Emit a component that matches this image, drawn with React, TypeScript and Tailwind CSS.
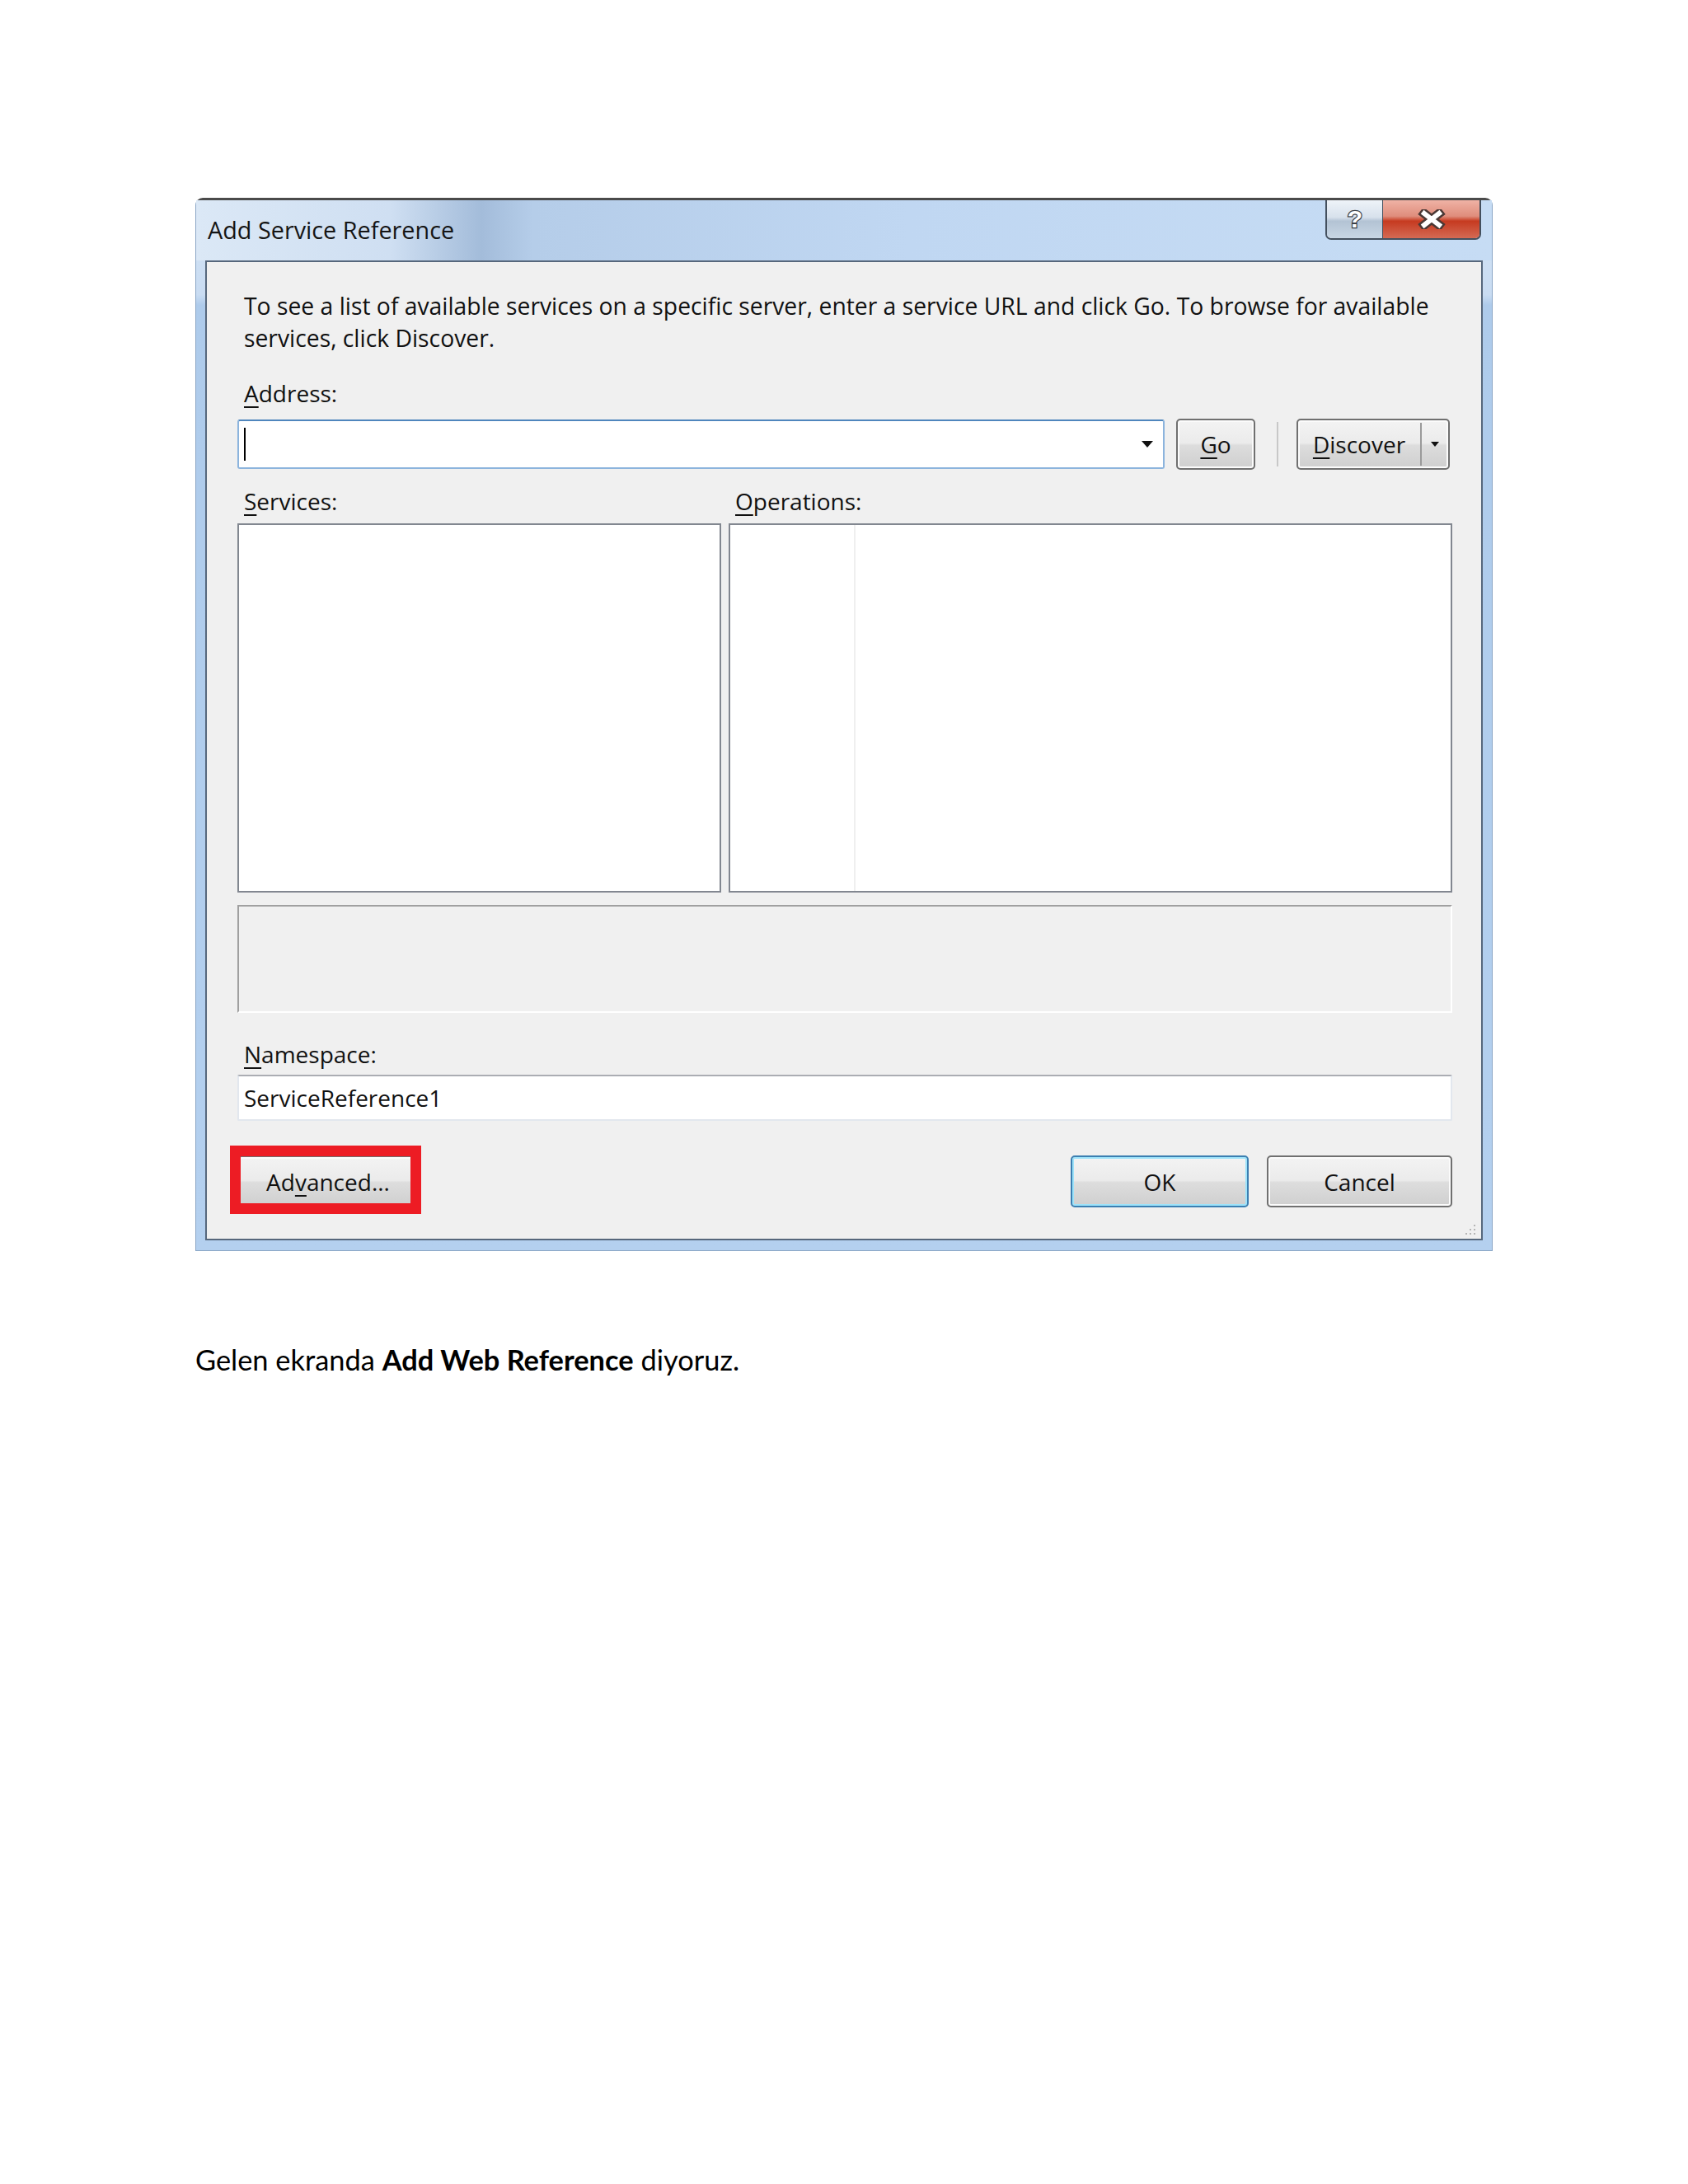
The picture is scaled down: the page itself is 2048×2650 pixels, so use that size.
import React from "react";

const ui = "font-['Open_Sans','Noto_Sans',sans-serif]";

const U = ({ children }: { children: React.ReactNode }) => (
  <span className="underline decoration-[2px] underline-offset-[5px]">{children}</span>
);

type BtnProps = {
  children: React.ReactNode;
  className?: string;
  primary?: boolean;
};

const Btn: React.FC<BtnProps> = ({ children, className = "", primary = false }) => (
  <div
    className={`flex items-center justify-center rounded-[5px] border-2 bg-[linear-gradient(to_bottom,#f3f3f3_0%,#ebebeb_48%,#dddddd_52%,#cfcfcf_100%)] text-[28px] text-[#111] ${
      primary
        ? "border-[#3c7fb1] shadow-[inset_0_0_0_2px_#9ee3fa]"
        : "border-[#707070] shadow-[inset_0_0_0_2px_#fbfbfb]"
    } ${className}`}
  >
    {children}
  </div>
);

const Arrow = ({ w = 14, h = 8 }: { w?: number; h?: number }) => (
  <svg width={w} height={h} viewBox={`0 0 ${w} ${h}`}>
    <path d={`M0 0H${w}L${w / 2} ${h}Z`} fill="#111" />
  </svg>
);

export default function App() {
  return (
    <div className="min-h-[2650px] w-[2048px] bg-white pl-[237px] pt-[240px]">
      {/* dialog */}
      <div
        className={`${ui} flex h-[1278px] w-[1574px] flex-col rounded-t-[9px] border-x border-b border-t-[3px] border-x-[#8aa6c6] border-b-[#8aa6c6] border-t-[#4a4a4a] bg-[linear-gradient(to_bottom,#d4e4f5_0%,#c9dcf2_9%,#aecbeb_10%,#b4d0ef_100%)]`}
      >
        {/* title bar */}
        <div className="flex h-[73px] items-start bg-[linear-gradient(to_right,#dbe8f6_0%,#cfdff2_15%,#a3bcda_22%,#b5cde9_26%,#c0d7f2_55%,#c6dcf4_100%)] pl-[14px] pr-[13px]">
          <div className="mt-[16px] text-[28.8px] leading-[40px] text-[#151515]">Add Service Reference</div>
          <div className="flex-1" />
          <div className="flex h-[48px] overflow-hidden rounded-b-[7px] border-2 border-t-0 border-[#44505e]">
            <div className="flex w-[68px] items-center justify-center border-r border-[#44505e] bg-[linear-gradient(to_bottom,#eef3f8_0%,#d7e1ec_45%,#b3c3d4_55%,#c8d6e4_100%)]">
              <svg width="24" height="32" viewBox="0 0 24 32">
                <text
                  x="12"
                  y="26"
                  textAnchor="middle"
                  fontSize="30"
                  fontWeight="bold"
                  fontFamily="Liberation Sans, sans-serif"
                  fill="#fff"
                  stroke="#3a3f46"
                  strokeWidth="2.5"
                  paintOrder="stroke"
                >
                  ?
                </text>
              </svg>
            </div>
            <div className="flex w-[117px] items-center justify-center bg-[linear-gradient(to_bottom,#efb2a5_0%,#df8d7c_42%,#c63a20_55%,#d46a54_100%)]">
              <svg width="34" height="24" viewBox="0 0 34 24">
                <path d="M8 5L26 19M26 5L8 19" stroke="#4a3835" strokeWidth="11" strokeLinecap="square" />
                <path d="M8 5L26 19M26 5L8 19" stroke="#fff" strokeWidth="6" strokeLinecap="square" />
              </svg>
            </div>
          </div>
        </div>

        {/* client area */}
        <div className="mx-[11px] mb-[12px] flex flex-1 flex-col border-2 border-[#56677c] bg-[#f0f0f0] pl-[37px] pr-[35px]">
          <div className="relative flex flex-1 flex-col">
            <div className="mt-[34px] whitespace-nowrap pl-[8px] text-[28.3px] leading-[39px] text-[#111]">
              To see a list of available services on a specific server, enter a service URL and click Go. To browse for available
              <br />
              services, click Discover.
            </div>

            <div className="mt-[28px] pl-[8px] text-[28px] leading-[38px] text-[#111]">
              <U>A</U>ddress:
            </div>
            <div className="mt-[12px] flex h-[62px] items-center">
              <div className="flex h-[60px] w-[1125px] items-center rounded-[3px] border-2 border-[#8cb4dd] border-t-[#4f86bd] bg-white pl-[6px] pr-[12px]">
                <div className="h-[40px] w-[2px] bg-black" />
                <div className="flex-1" />
                <Arrow />
              </div>
              <Btn className="ml-[14px] h-[62px] w-[96px]">
                <U>G</U>o
              </Btn>
              <div className="ml-[26px] h-[54px] w-[2px] bg-[#c8c8c8]" />
              <Btn className="ml-[22px] h-[62px] w-[186px] !justify-start">
                <div className="flex flex-1 justify-center">
                  <span>
                    <U>D</U>iscover
                  </span>
                </div>
                <div className="h-[52px] w-[2px] bg-[#9a9a9a]" />
                <div className="flex w-[32px] justify-center">
                  <Arrow w={10} h={6} />
                </div>
              </Btn>
            </div>

            <div className="mt-[19px] flex text-[28px] leading-[38px] text-[#111]">
              <div className="w-[596px] pl-[8px]">
                <U>S</U>ervices:
              </div>
              <div className="pl-[8px]">
                <U>O</U>perations:
              </div>
            </div>
            <div className="mt-[8px] flex h-[448px] gap-[9px]">
              <div className="w-[587px] border-2 border-[#828790] bg-white" />
              <div className="flex flex-1 border-2 border-[#828790] bg-white">
                <div className="w-[152px] border-r-2 border-[#efefef]" />
              </div>
            </div>

            <div className="mt-[15px] h-[131px] border-2 border-[#a0a0a0] border-b-white border-r-white bg-[#f0f0f0]" />

            <div className="mt-[31px] pl-[8px] text-[28px] leading-[38px] text-[#111]">
              <U>N</U>amespace:
            </div>
            <div className="mt-[6px] flex h-[56px] items-center rounded-[2px] border-2 border-[#e2e7ee] border-t-[#abadb3] bg-white pl-[6px] text-[28px] text-[#111]">
              ServiceReference1
            </div>

            <div className="mt-[42px] flex h-[63px] items-center">
              <div className="relative">
                <Btn className="h-[63px] w-[220px]">
                  Ad<U>v</U>anced...
                </Btn>
                <div className="pointer-events-none absolute -left-[9px] -top-[12px] h-[83px] w-[232px] border-[13px] border-[#ed1c24]" />
              </div>
              <div className="flex-1" />
              <Btn primary className="h-[63px] w-[216px]">
                OK
              </Btn>
              <Btn className="ml-[22px] h-[63px] w-[225px]">Cancel</Btn>
            </div>

            <svg className="absolute -right-[29px] bottom-[4px]" width="14" height="14" viewBox="0 0 14 14">
              <g fill="#b5b5b5">
                <rect x="11" y="1" width="2" height="2" />
                <rect x="6" y="6" width="2" height="2" />
                <rect x="11" y="6" width="2" height="2" />
                <rect x="1" y="11" width="2" height="2" />
                <rect x="6" y="11" width="2" height="2" />
                <rect x="11" y="11" width="2" height="2" />
              </g>
            </svg>
          </div>
        </div>
      </div>

      <p className="mt-[110px] font-['Lato','Open_Sans',sans-serif] text-[34.4px] leading-[43px] text-black">
        Gelen ekranda <b>Add Web Reference</b> diyoruz.
      </p>
    </div>
  );
}
